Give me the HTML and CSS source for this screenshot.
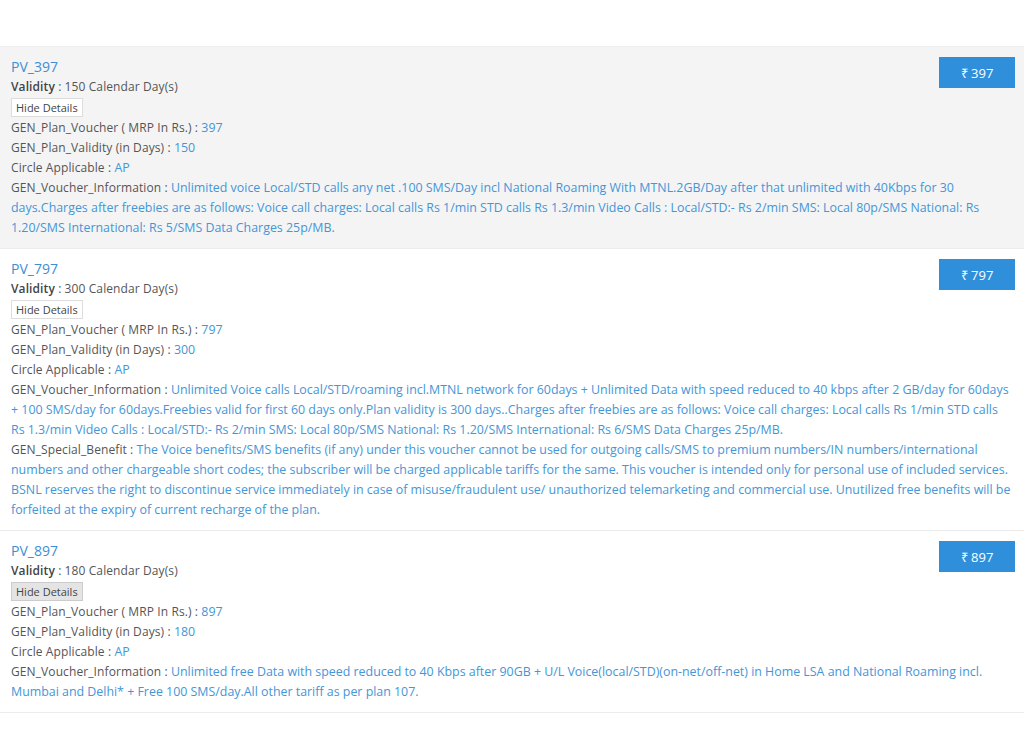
FILE: index.html
```html
<!DOCTYPE html>
<html lang="en">

<head>
    <meta charset="UTF-8">
    <meta name="viewport" content="width=device-width, initial-scale=1.0">
    <title>Plans</title>
    <link rel="stylesheet" href="styles.css">
</head>

<body>
    <div class="lista">
        <div class="plano ativo">
            <button class="preco">&#8377; 397</button>
            <div class="titulo">PV_397</div>
            <div class="linha"><b>Validity</b> : 150 Calendar Day(s)</div>
            <div class="linha-btn"><button class="detalhes">Hide Details</button></div>
            <div class="linha">GEN_Plan_Voucher ( MRP In Rs.) : <span class="valor">397</span></div>
            <div class="linha">GEN_Plan_Validity (in Days) : <span class="valor">150</span></div>
            <div class="linha">Circle Applicable : <span class="valor">AP</span></div>
            <div class="linha">GEN_Voucher_Information : <span class="valor">Unlimited voice Local/STD calls any net .100 SMS/Day incl National Roaming With MTNL.2GB/Day after that unlimited with 40Kbps for 30 days.Charges after freebies are as follows: Voice call charges: Local calls Rs 1/min STD calls Rs 1.3/min Video Calls : Local/STD:- Rs 2/min SMS: Local 80p/SMS National: Rs 1.20/SMS International: Rs 5/SMS Data Charges 25p/MB.</span></div>
        </div>

        <div class="plano">
            <button class="preco">&#8377; 797</button>
            <div class="titulo">PV_797</div>
            <div class="linha"><b>Validity</b> : 300 Calendar Day(s)</div>
            <div class="linha-btn"><button class="detalhes">Hide Details</button></div>
            <div class="linha">GEN_Plan_Voucher ( MRP In Rs.) : <span class="valor">797</span></div>
            <div class="linha">GEN_Plan_Validity (in Days) : <span class="valor">300</span></div>
            <div class="linha">Circle Applicable : <span class="valor">AP</span></div>
            <div class="linha">GEN_Voucher_Information : <span class="valor">Unlimited Voice calls Local/STD/roaming incl.MTNL network for 60days + Unlimited Data with speed reduced to 40 kbps after 2 GB/day for 60days + 100 SMS/day for 60days.Freebies valid for first 60 days only.Plan validity is 300 days..Charges after freebies are as follows: Voice call charges: Local calls Rs 1/min STD calls Rs 1.3/min Video Calls : Local/STD:- Rs 2/min SMS: Local 80p/SMS National: Rs 1.20/SMS International: Rs 6/SMS Data Charges 25p/MB.</span></div>
            <div class="linha">GEN_Special_Benefit : <span class="valor">The Voice benefits/SMS benefits (if any) under this voucher cannot be used for outgoing calls/SMS to premium numbers/IN numbers/international numbers and other chargeable short codes; the subscriber will be charged applicable tariffs for the same. This voucher is intended only for personal use of included services. BSNL reserves the right to discontinue service immediately in case of misuse/fraudulent use/ unauthorized telemarketing and commercial use. Unutilized free benefits will be forfeited at the expiry of current recharge of the plan.</span></div>
        </div>

        <div class="plano">
            <button class="preco">&#8377; 897</button>
            <div class="titulo">PV_897</div>
            <div class="linha"><b>Validity</b> : 180 Calendar Day(s)</div>
            <div class="linha-btn"><button class="detalhes pressionado">Hide Details</button></div>
            <div class="linha">GEN_Plan_Voucher ( MRP In Rs.) : <span class="valor">897</span></div>
            <div class="linha">GEN_Plan_Validity (in Days) : <span class="valor">180</span></div>
            <div class="linha">Circle Applicable : <span class="valor">AP</span></div>
            <div class="linha">GEN_Voucher_Information : <span class="valor">Unlimited free Data with speed reduced to 40 Kbps after 90GB + U/L Voice(local/STD)(on-net/off-net) in Home LSA and National Roaming incl. Mumbai and Delhi* + Free 100 SMS/day.All other tariff as per plan 107.</span></div>
        </div>
    </div>
</body>

</html>
```

FILE: styles.css
```css
body {
    margin: 0;
    background-color: #fff;
    font-family: "Open Sans", "Liberation Sans", sans-serif;
    font-size: 12px;
    color: #555;
}

.lista {
    margin-top: 46px;
    border-top: 1px solid #eee;
}

.plano {
    padding: 10px 10px 10px 11px;
    border-bottom: 1px solid #ececec;
}

.plano.ativo {
    background-color: #f4f4f4;
}

.titulo {
    font-size: 14px;
    line-height: 20px;
    color: #3c8fd5;
}

.linha {
    line-height: 20px;
    letter-spacing: 0.1px;
}

.linha b {
    font-weight: 600;
    color: #444;
}

.valor {
    color: #4396d8;
    font-size: 12.4px;
    letter-spacing: 0;
}

.linha-btn {
    height: 21px;
    display: flex;
    align-items: center;
}

.detalhes {
    font-family: "Open Sans", "Liberation Sans", sans-serif;
    font-size: 11px;
    color: #444;
    background-color: #fff;
    border: 1px solid #ddd;
    padding: 1px 4px;
    height: 19px;
    line-height: 15px;
}

.detalhes.pressionado {
    background-color: #e4e4e4;
    border-color: #ccc;
}

.preco {
    float: right;
    margin-right: -1px;
    width: 76px;
    height: 31px;
    background-color: #2f8fdb;
    color: #fff;
    border: none;
    font-family: "Open Sans", "Liberation Sans", sans-serif;
    font-size: 13px;
}
```
